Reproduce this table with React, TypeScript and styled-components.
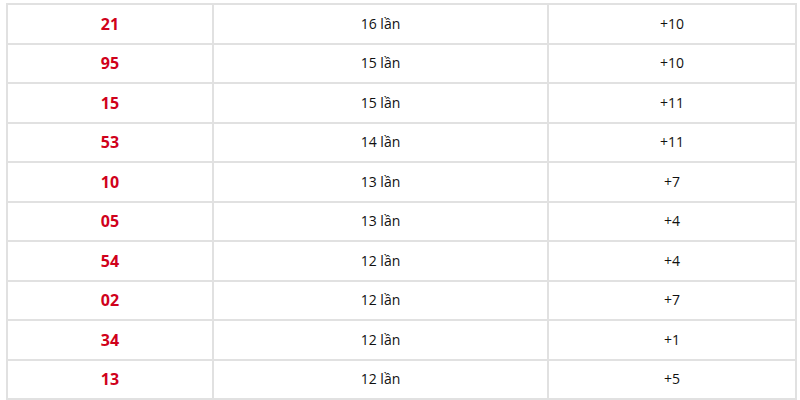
import styled, { createGlobalStyle } from 'styled-components';

const rows: [string, number, string][] = [
  ['21', 16, '+10'],
  ['95', 15, '+10'],
  ['15', 15, '+11'],
  ['53', 14, '+11'],
  ['10', 13, '+7'],
  ['05', 13, '+4'],
  ['54', 12, '+4'],
  ['02', 12, '+7'],
  ['34', 12, '+1'],
  ['13', 12, '+5'],
];

const GlobalStyle = createGlobalStyle`
  body {
    margin: 0;
    background: #fff;
    font-family: 'Open Sans', 'Noto Sans', sans-serif;
  }
`;

const Wrap = styled.div`
  padding: 3px 3px 0 6px;
`;

const Table = styled.table`
  width: 791px;
  border-collapse: collapse;
  table-layout: fixed;
`;

const Row = styled.tr`
  height: 39.5px;
`;

const Cell = styled.td<{ $num?: boolean }>`
  border: 2px solid #e1e1e1;
  text-align: center;
  padding: 0;
  font-size: ${(p) => (p.$num ? '16px' : '14px')};
  font-weight: ${(p) => (p.$num ? 700 : 400)};
  color: ${(p) => (p.$num ? '#d0011b' : '#111')};
  line-height: 20px;
`;

const App = () => (
  <Wrap>
    <GlobalStyle />
    <Table>
      <colgroup>
        <col style={{ width: 206 }} />
        <col style={{ width: 335 }} />
        <col />
      </colgroup>
      <tbody>
        {rows.map(([num, times, diff]) => (
          <Row key={num}>
            <Cell $num>{num}</Cell>
            <Cell>{times} lần</Cell>
            <Cell>{diff}</Cell>
          </Row>
        ))}
      </tbody>
    </Table>
  </Wrap>
);

export default App;
